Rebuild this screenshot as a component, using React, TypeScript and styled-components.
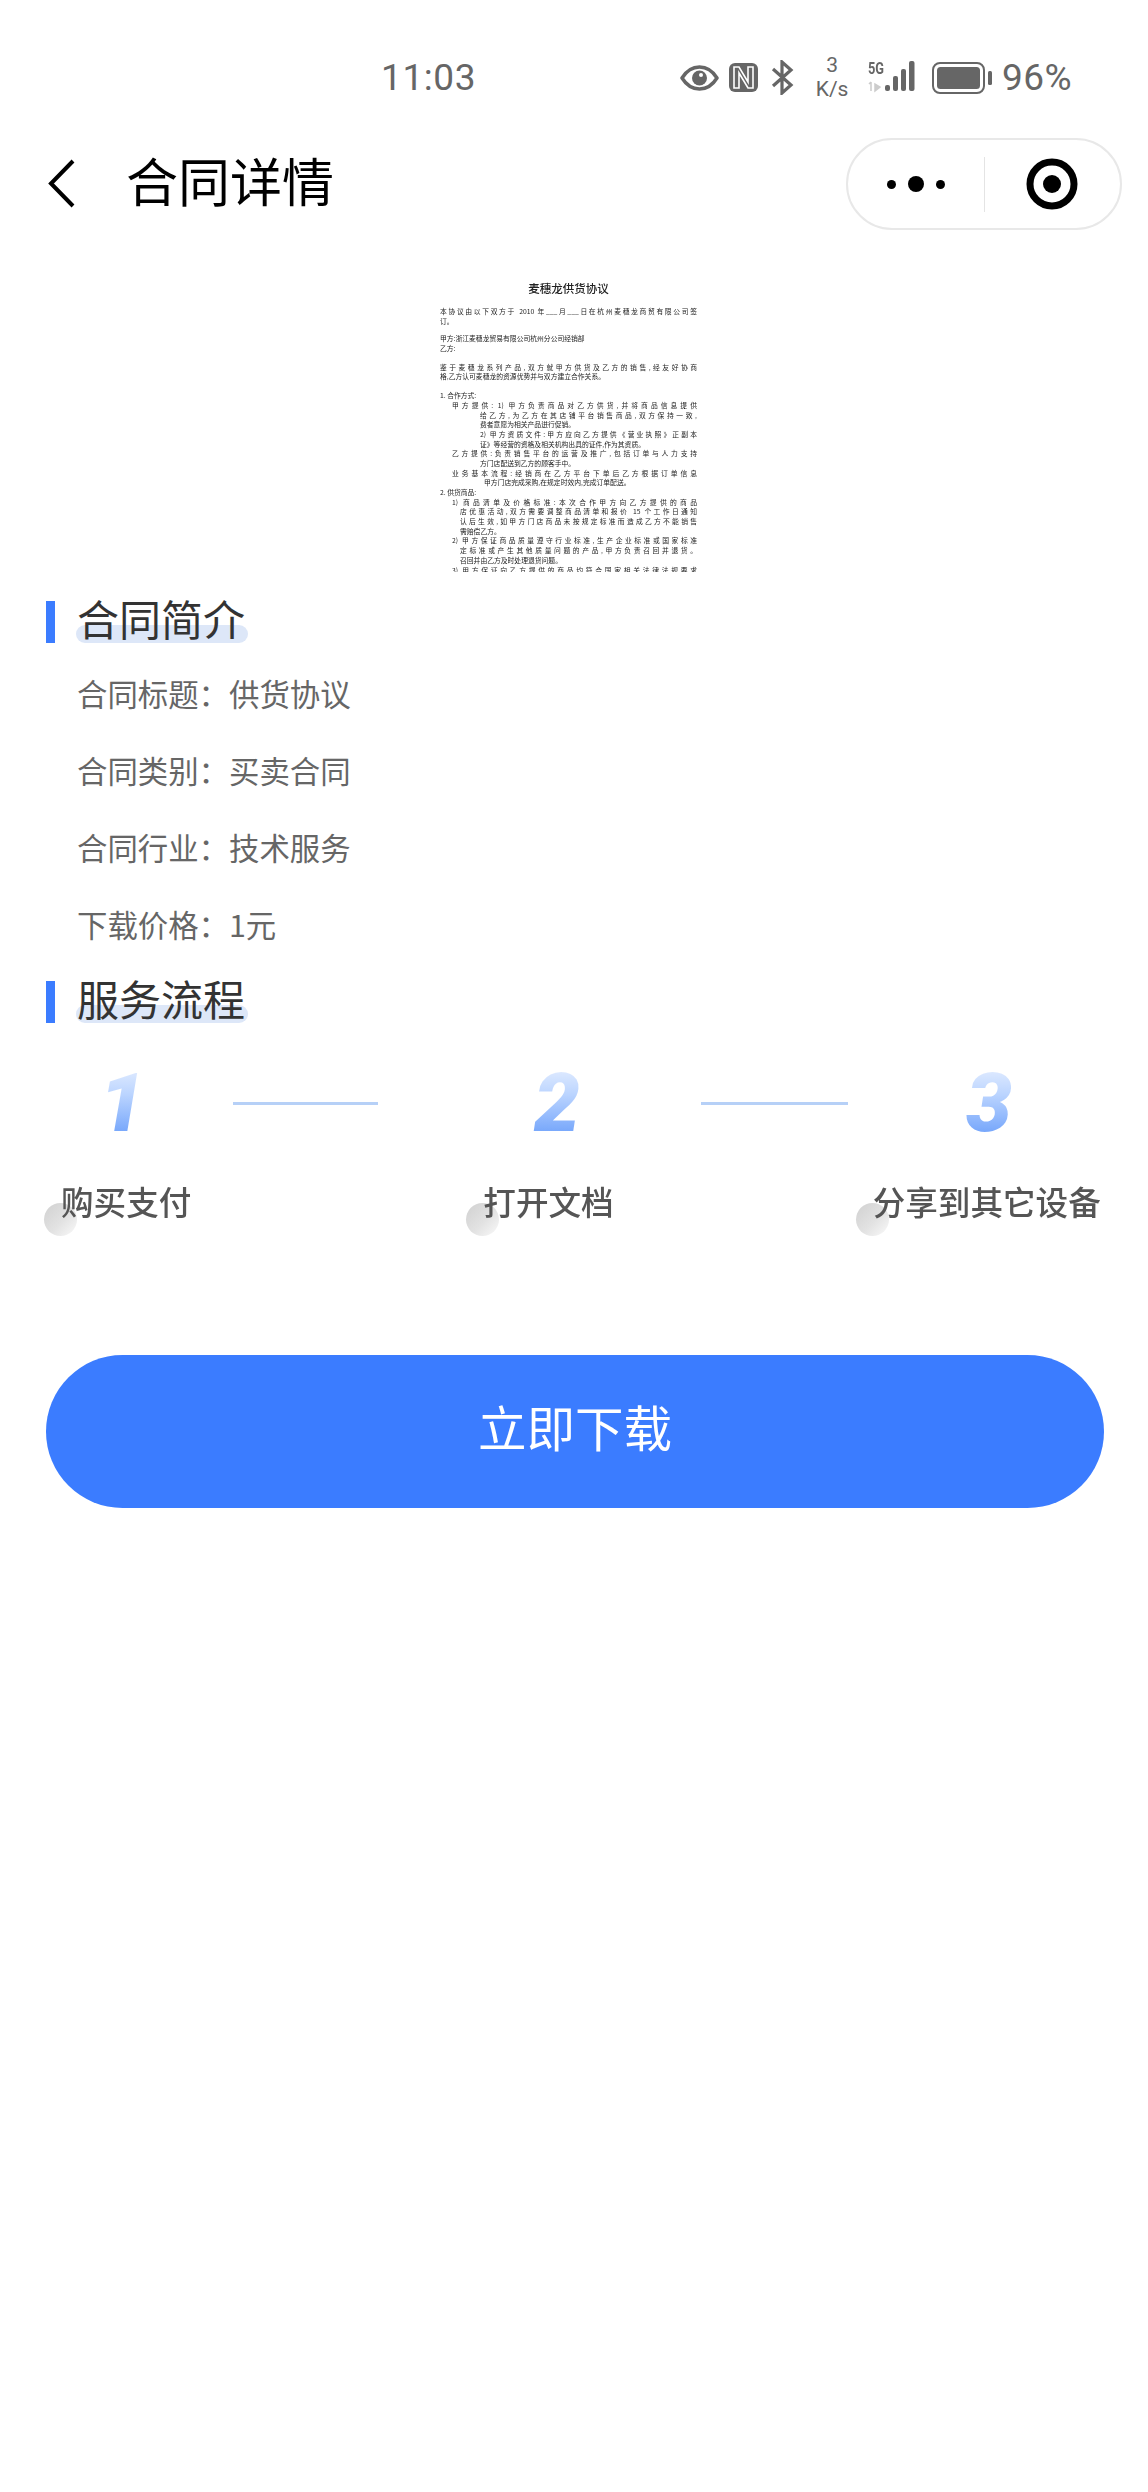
import React from 'react';
import styled, { createGlobalStyle } from 'styled-components';

const GlobalStyle = createGlobalStyle`
  html, body {
    margin: 0;
    padding: 0;
    background: #fff;
    font-family: Roboto, "Noto Sans CJK SC", "Noto Sans", sans-serif;
  }
`;

const Page = styled.div`
  width: 1148px;
  height: 2492px;
  background: #fff;
  overflow: hidden;
`;

const StatusBar = styled.div`
  height: 138px;
  box-sizing: border-box;
  padding: 54px 76px 0 381px;
  display: flex;
  align-items: flex-start;
  justify-content: space-between;
  color: #666;
`;

const Time = styled.div`
  font-size: 37px;
  line-height: 48px;
  letter-spacing: 0.6px;
  font-weight: 400;
`;

const StatusIcons = styled.div`
  display: flex;
  align-items: flex-start;
`;

const StatusIcon = styled.svg<{ $ml: number; $mt: number }>`
  display: block;
  margin-left: ${p => p.$ml}px;
  margin-top: ${p => p.$mt}px;
`;

const Speed = styled.div`
  width: 36px;
  margin: -1px 0 0 19px;
  font-size: 21px;
  line-height: 24px;
  text-align: center;
  font-weight: 400;
`;

const Network = styled.div`
  position: relative;
  width: 51px;
  height: 32px;
  margin: 7px 0 0 18px;
`;

const FiveG = styled.span`
  position: absolute;
  left: 0;
  top: 0;
  font-size: 16px;
  line-height: 15px;
  font-weight: 700;
  transform: scaleX(0.8);
  transform-origin: left top;
`;

const Percent = styled.div`
  margin-left: 10px;
  font-size: 37px;
  line-height: 48px;
  letter-spacing: 0.4px;
  font-weight: 400;
`;

const NavBar = styled.div`
  height: 92px;
  box-sizing: border-box;
  padding: 0 26px 0 48px;
  display: flex;
  align-items: center;
`;

const BackIcon = styled.svg`
  display: block;
`;

const NavTitle = styled.h1`
  margin: 1px 0 0 50px;
  flex: 1;
  font-size: 52px;
  line-height: 60px;
  font-weight: 400;
  color: #000;
`;

const Capsule = styled.div`
  width: 276px;
  height: 92px;
  box-sizing: border-box;
  border: 2px solid #e8e8e8;
  border-radius: 46px;
  display: flex;
  align-items: center;
`;

const CapsuleCell = styled.div`
  flex: 1;
  display: flex;
  justify-content: center;
  align-items: center;
`;

const CapsuleDivider = styled.div`
  width: 1px;
  height: 55px;
  background: #e4e4e4;
`;

const Dot = styled.span<{ $size: number }>`
  width: ${p => p.$size}px;
  height: ${p => p.$size}px;
  border-radius: 50%;
  background: #000;
  margin: 0 6px;
`;

const DocPage = styled.div`
  width: 266px;
  height: 302px;
  margin: 40px 0 0 437px;
  box-sizing: border-box;
  padding: 10px 6px 0 3px;
  overflow: hidden;
  filter: blur(0.4px);
  font-family: "Noto Sans CJK SC", sans-serif;
  color: #222;
`;

const DocTitle = styled.div`
  font-family: "Noto Sans CJK SC", serif;
  font-size: 11.5px;
  line-height: 16px;
  font-weight: 500;
  text-align: center;
  margin-bottom: 11px;
`;

const DocLine = styled.div<{ $indent?: number; $gap?: number; $full?: boolean }>`
  font-size: 6.8px;
  line-height: 9.7px;
  height: 9.7px;
  white-space: nowrap;
  padding-left: ${p => p.$indent || 0}px;
  margin-top: ${p => p.$gap || 0}px;
  text-align: ${p => (p.$full ? 'justify' : 'left')};
  text-align-last: ${p => (p.$full ? 'justify' : 'left')};
`;

const Section = styled.section`
  padding: 0 0 0 46px;
`;

const SectionHeader = styled.div<{ $top: number }>`
  display: flex;
  align-items: stretch;
  height: 42px;
  margin-top: ${p => p.$top}px;
`;

const SectionBar = styled.div`
  width: 9px;
  background: #3b7cff;
`;

const SectionTitle = styled.h2`
  position: relative;
  margin: 0 0 0 21px;
  width: 172px;
  padding-left: 1px;
  box-sizing: border-box;
  font-size: 42px;
  line-height: 42px;
  font-weight: 400;
  color: #333;
  white-space: nowrap;
  z-index: 0;

  &::after {
    content: '';
    position: absolute;
    left: 0;
    right: 0;
    bottom: 0;
    height: 18px;
    border-radius: 9px;
    background: #dde7f8;
    z-index: -1;
  }
`;

const InfoList = styled.div`
  padding: 30px 0 3px 31px;
`;

const InfoRow = styled.div`
  font-family: "Noto Sans CJK SC", sans-serif;
  font-size: 30.4px;
  line-height: 40px;
  color: #666;
  margin-bottom: 37px;

  &:last-child {
    margin-bottom: 0;
  }
`;

const StepNumbers = styled.div`
  display: flex;
  align-items: center;
  height: 62px;
  margin-top: 49px;
`;

const StepNumber = styled.div<{ $ml: number; $w: number }>`
  width: ${p => p.$w}px;
  margin-left: ${p => p.$ml}px;
  font-family: Roboto, sans-serif;
  font-size: 82px;
  line-height: 62px;
  font-weight: 900;
  font-style: italic;
  text-align: center;
  background: linear-gradient(180deg, #dbe8ff 0%, #bcd5ff 35%, #74a5fb 100%);
  -webkit-background-clip: text;
  background-clip: text;
  color: transparent;
  filter: blur(0.5px);
`;

const StepLine = styled.div<{ $ml: number; $w: number }>`
  width: ${p => p.$w}px;
  height: 3px;
  margin-left: ${p => p.$ml}px;
  background: #b6d0f7;
`;

const StepLabels = styled.div`
  display: flex;
  margin-top: 47px;
`;

const StepLabel = styled.div<{ $ml: number }>`
  position: relative;
  margin-left: ${p => p.$ml}px;
  font-family: "Noto Sans CJK SC", sans-serif;
  font-size: 32.6px;
  line-height: 40px;
  font-weight: 500;
  color: #555;
  white-space: nowrap;
  z-index: 0;

  & > span {
    display: block;
    filter: blur(0.4px);
  }

  &::before {
    content: '';
    position: absolute;
    left: -17px;
    top: 22px;
    width: 33px;
    height: 33px;
    border-radius: 50%;
    background: linear-gradient(135deg, #d0d0d0 0%, #e2e2e2 55%, #fafafa 100%);
    z-index: -1;
  }
`;

const DownloadButton = styled.button`
  display: block;
  width: 1058px;
  height: 153px;
  margin: 134px 0 0 46px;
  border: 0;
  border-radius: 77px;
  background: #3b7cff;
  color: #fff;
  font-family: "Noto Sans CJK SC", sans-serif;
  font-size: 48.5px;
  letter-spacing: 0;
  padding: 0 0 12px;
`;

const docLines: { text: string; indent?: number; gap?: number; full?: boolean }[] = [
  { text: '本协议由以下双方于 2010 年___月___日在杭州麦穗龙商贸有限公司签', full: true },
  { text: '订。' },
  { text: '甲方:浙江麦穗龙贸易有限公司杭州分公司经销部', gap: 8 },
  { text: '乙方:' },
  { text: '    鉴于麦穗龙系列产品,双方就甲方供货及乙方的销售,经友好协商', gap: 9, full: true },
  { text: '格,乙方认可麦穗龙的资源优势并与双方建立合作关系。' },
  { text: '1.   合作方式:', gap: 9 },
  { text: '甲方提供: 1) 甲方负责商品对乙方供货,并将商品信息提供', indent: 12, full: true },
  { text: '给乙方,为乙方在其店铺平台销售商品,双方保持一致,', indent: 40, full: true },
  { text: '费者意愿为相关产品进行促销。', indent: 40 },
  { text: '2) 甲方资质文件:甲方应向乙方提供《营业执照》正副本', indent: 40, full: true },
  { text: '证》等经营的资格及相关机构出具的证件,作为其资质。', indent: 40 },
  { text: '乙方提供:负责销售平台的运营及推广,包括订单与人力支持', indent: 12, full: true },
  { text: '方门店配送到乙方的顾客手中。', indent: 40 },
  { text: '业务基本流程:经销商在乙方平台下单后乙方根据订单信息', indent: 12, full: true },
  { text: '甲方门店完成采购,在规定时效内,完成订单配送。', indent: 44 },
  { text: '2.   供货商品:' },
  { text: '1) 商品清单及价格标准:本次合作甲方向乙方提供的商品', indent: 12, full: true },
  { text: '店优惠活动,双方需要调整商品清单和报价 15 个工作日通知', indent: 20, full: true },
  { text: '认后生效,如甲方门店商品未按规定标准而造成乙方不能销售', indent: 20, full: true },
  { text: '需赔偿乙方。', indent: 20 },
  { text: '2) 甲方保证商品质量遵守行业标准,生产企业标准或国家标准', indent: 12, full: true },
  { text: '定标准或产生其他质量问题的产品,甲方负责召回并退货。', indent: 20, full: true },
  { text: '召回并由乙方及时处理退货问题。', indent: 20 },
  { text: '3) 甲方保证向乙方提供的商品均符合国家相关法律法规要求', indent: 12, full: true },
];

// full-width colon, as the labels in the app use it
const COLON = '\uFF1A';

const infoRows = [
  ['合同标题', '供货协议'],
  ['合同类别', '买卖合同'],
  ['合同行业', '技术服务'],
  ['下载价格', '1元'],
];

const App: React.FC = () => {
  return (
    <Page>
      <GlobalStyle />
      <StatusBar>
        <Time>11:03</Time>
        <StatusIcons>
          <StatusIcon $ml={0} $mt={11} width="39" height="26" viewBox="0 0 39 26">
            <path d="M2 13C7 5 13 2 19.5 2S32 5 37 13C32 21 26 24 19.5 24S7 21 2 13Z" fill="none" stroke="#666" strokeWidth="3.5" strokeLinejoin="round" />
            <circle cx="19.5" cy="13" r="7.5" fill="#666" />
            <circle cx="21" cy="10" r="2" fill="#fff" />
          </StatusIcon>
          <StatusIcon $ml={10} $mt={9} width="29" height="29" viewBox="0 0 29 29">
            <rect width="29" height="29" rx="6" fill="#666" />
            <path d="M5 4H10L19 19V4H24V25H19L10 10V25H5Z" fill="none" stroke="#fff" strokeWidth="1.6" />
          </StatusIcon>
          <StatusIcon $ml={12} $mt={6} width="25" height="35" viewBox="0 0 25 35">
            <path d="M3 9L21 25L12 33V2L21 10L3 26" fill="none" stroke="#666" strokeWidth="3.2" />
          </StatusIcon>
          <Speed>
            3
            <br />
            K/s
          </Speed>
          <Network>
            <FiveG>5G</FiveG>
            <svg width="51" height="32" viewBox="0 0 51 32">
              <path d="M3 21V30M3 21L1 23M7 23V30L12 26Z" fill="#ccc" stroke="#ccc" strokeWidth="1.5" />
              <rect x="17" y="24" width="5" height="6" rx="2" fill="#666" />
              <rect x="25" y="15" width="5" height="15" rx="2" fill="#666" />
              <rect x="33" y="8" width="5" height="22" rx="2" fill="#666" />
              <rect x="41" y="0" width="5.5" height="30" rx="2" fill="#666" />
            </svg>
          </Network>
          <StatusIcon $ml={13} $mt={8} width="60" height="32" viewBox="0 0 60 32">
            <rect x="1" y="1" width="51" height="30" rx="7" fill="none" stroke="#666" strokeWidth="2" />
            <rect x="5" y="5" width="43" height="22" rx="3.5" fill="#666" />
            <rect x="56" y="9" width="4" height="14" rx="1.5" fill="#666" />
          </StatusIcon>
          <Percent>96%</Percent>
        </StatusIcons>
      </StatusBar>

      <NavBar>
        <BackIcon width="28" height="50" viewBox="0 0 28 50">
          <path d="M25 2L3 24.5L25 47" fill="none" stroke="#000" strokeWidth="4" />
        </BackIcon>
        <NavTitle>合同详情</NavTitle>
        <Capsule>
          <CapsuleCell>
            <Dot $size={9} />
            <Dot $size={16} />
            <Dot $size={9} />
          </CapsuleCell>
          <CapsuleDivider />
          <CapsuleCell>
            <svg width="52" height="52" viewBox="0 0 52 52">
              <circle cx="26" cy="26" r="22" fill="none" stroke="#000" strokeWidth="7" />
              <circle cx="26" cy="26" r="9" fill="#000" />
            </svg>
          </CapsuleCell>
        </Capsule>
      </NavBar>

      <DocPage>
        <DocTitle>麦穗龙供货协议</DocTitle>
        {docLines.map((line, i) => (
          <DocLine key={i} $indent={line.indent} $gap={line.gap} $full={line.full}>
            {line.text}
          </DocLine>
        ))}
      </DocPage>

      <Section>
        <SectionHeader $top={29}>
          <SectionBar />
          <SectionTitle>合同简介</SectionTitle>
        </SectionHeader>
        <InfoList>
          {infoRows.map(([label, value]) => (
            <InfoRow key={label} lang="zh-CN">
              {label}
              {COLON}
              {value}
            </InfoRow>
          ))}
        </InfoList>
        <SectionHeader $top={34}>
          <SectionBar />
          <SectionTitle>服务流程</SectionTitle>
        </SectionHeader>
      </Section>

      <StepNumbers>
        <StepNumber $ml={92} $w={60}>1</StepNumber>
        <StepLine $ml={81} $w={145} />
        <StepNumber $ml={149} $w={60}>2</StepNumber>
        <StepLine $ml={114} $w={147} />
        <StepNumber $ml={111} $w={60}>3</StepNumber>
      </StepNumbers>

      <StepLabels>
        <StepLabel $ml={61}><span>购买支付</span></StepLabel>
        <StepLabel $ml={292}><span>打开文档</span></StepLabel>
        <StepLabel $ml={259}><span>分享到其它设备</span></StepLabel>
      </StepLabels>

      <DownloadButton>立即下载</DownloadButton>
    </Page>
  );
};

export default App;
